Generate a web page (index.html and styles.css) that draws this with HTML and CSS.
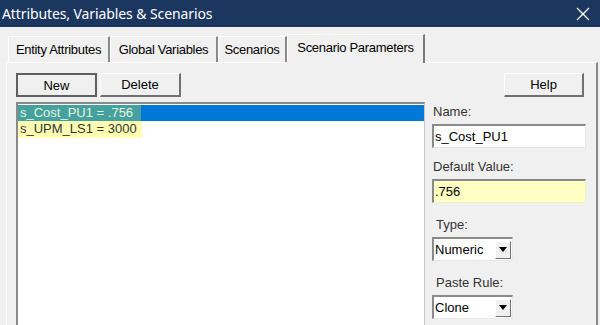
FILE: index.html
```html
<!DOCTYPE html>
<html>
<head>
<meta charset="utf-8">
<link rel="stylesheet" href="styles.css">
</head>
<body>
<div class="window">
  <div class="titlebar">
    <span class="title">Attributes, Variables &amp; Scenarios</span>
    <svg class="close" width="14" height="14" viewBox="0 0 14 14"><path d="M1 1 L13 13 M13 1 L1 13" stroke="#fff" stroke-width="1.3" fill="none"/></svg>
  </div>
  <div class="tabs">
    <div class="tab t1">Entity Attributes</div>
    <div class="tab t2">Global Variables</div>
    <div class="tab t3">Scenarios</div>
    <div class="tab t4 active">Scenario Parameters</div>
  </div>
  <div class="panel">
    <div class="leftcol">
      <div class="btnrow">
        <button class="btn btn-new">New</button>
        <button class="btn btn-del">Delete</button>
      </div>
      <div class="listbox">
        <div class="item selected"><span class="hl-sel">s_Cost_PU1 = .756</span></div>
        <div class="item"><span class="hl">s_UPM_LS1 = 3000</span></div>
      </div>
    </div>
    <div class="rightcol">
      <button class="btn btn-help">Help</button>
      <div class="label l-name">Name:</div>
      <div class="input">s_Cost_PU1</div>
      <div class="label l-def">Default Value:</div>
      <div class="input yellow">.756</div>
      <div class="label l-type">Type:</div>
      <div class="select"><span class="sel-text">Numeric</span><span class="arrow"><svg width="8" height="5" viewBox="0 0 8 5"><path d="M0 0 L8 0 L4 5 Z" fill="#000"/></svg></span></div>
      <div class="label l-paste">Paste Rule:</div>
      <div class="select"><span class="sel-text">Clone</span><span class="arrow"><svg width="8" height="5" viewBox="0 0 8 5"><path d="M0 0 L8 0 L4 5 Z" fill="#000"/></svg></span></div>
    </div>
  </div>
</div>
</body>
</html>
```

FILE: styles.css
```css
* { box-sizing: border-box; }
html, body { margin: 0; padding: 0; }
body {
  width: 600px;
  height: 325px;
  overflow: hidden;
  background: #f0f0f0;
  font-family: "Liberation Sans", Arial, sans-serif;
  font-size: 13px;
  color: #000;
}
.window { width: 600px; height: 325px; display: flex; flex-direction: column; }
.titlebar {
  height: 27px;
  background: #1b365f;
  color: #fff;
  display: flex;
  align-items: center;
  justify-content: space-between;
  padding: 0 10px 0 2px;
}
.title { font-family: "Noto Sans", sans-serif; font-size: 14px; letter-spacing: -0.1px; }
.close { display: block; }
.tabs {
  height: 35px;
  display: flex;
  align-items: flex-end;
  padding-left: 8px;
}
.tab {
  height: 26px;
  display: flex;
  align-items: center;
  justify-content: center;
  white-space: nowrap;
  letter-spacing: -0.3px;
  border-top: 1px solid #fff;
  border-left: 1px solid #fff;
  border-right: 2px solid #8a8a8a;
  background: #f0f0f0;
}
.t1 { width: 102px; }
.t2 { width: 108px; }
.t3 { width: 69px; }
.t4 { width: 138px; }
.tab.active {
  height: 29px;
  padding-bottom: 3px;
  margin-bottom: -1px;
  position: relative;
  z-index: 1;
  border-right: 2px solid #7a7a7a;
}
.panel {
  flex: 1;
  margin: 0 2px 0 6px;
  border-top: 1px solid #fff;
  border-left: 1px solid #fff;
  border-right: 2px solid #8a8a8a;
  display: flex;
  gap: 7px;
  padding: 10px 0 0 9px;
}
.leftcol { width: 409px; display: flex; flex-direction: column; }
.btnrow { display: flex; gap: 3px; }
.btn {
  font-family: "Liberation Sans", Arial, sans-serif;
  font-size: 13px;
  width: 81px;
  height: 24px;
  background: #f0f0f0;
  border-top: 1px solid #fff;
  border-left: 1px solid #fff;
  border-right: 2px solid #707070;
  border-bottom: 2px solid #707070;
  padding: 0;
  color: #000;
}
.btn-new { border: 2px solid #606060; }
.listbox {
  margin-top: 5px;
  flex: 1;
  background: #fff;
  border-top: 2px solid #8a8a8a;
  border-left: 2px solid #8a8a8a;
  border-right: 1px solid #c8c8c8;
  padding: 1px 0 0 0;
}
.item { height: 16px; line-height: 16px; }
.item.selected { background: #0078d7; }
.hl-sel { display: inline-block; background: #45a0a0; color: #e8f4d8; padding: 0 8px 0 2px; height: 16px; }
.hl { display: inline-block; background: #ffffb4; color: #333; padding: 0 5px 0 2px; height: 17px; }
.rightcol { width: 154px; display: flex; flex-direction: column; }
.btn-help { margin-left: 72px; width: 80px; height: 24px; }
.label { height: 16px; line-height: 16px; color: #333; }
.l-name { margin-top: 7px; padding-left: 1px; }
.l-def { margin-top: 11px; padding-left: 1px; }
.l-type { margin-top: 14px; padding-left: 4px; }
.l-paste { margin-top: 14px; padding-left: 4px; }
.input {
  margin-top: 4px;
  height: 24px;
  width: 154px;
  background: #fff;
  border-top: 2px solid #8a8a8a;
  border-left: 2px solid #8a8a8a;
  border-right: 1px solid #e8e8e8;
  border-bottom: 1px solid #e8e8e8;
  padding-left: 1px;
  line-height: 21px;
}
.input.yellow { background: #ffffc4; border-right-color: #f0f0c0; border-bottom-color: #f0f0c0; }
.select {
  margin-top: 4px;
  width: 81px;
  height: 24px;
  background: #fff;
  border-top: 2px solid #8a8a8a;
  border-left: 2px solid #8a8a8a;
  border-right: 1px solid #e8e8e8;
  border-bottom: 1px solid #e8e8e8;
  display: flex;
  align-items: center;
  justify-content: space-between;
  padding: 0 1px 0 1px;
}
.arrow {
  width: 16px;
  height: 18px;
  background: #f0f0f0;
  border-top: 1px solid #fff;
  border-left: 1px solid #fff;
  border-right: 1px solid #707070;
  border-bottom: 1px solid #707070;
  display: flex;
  align-items: center;
  justify-content: center;
}
.arrow svg { display: block; }
```
